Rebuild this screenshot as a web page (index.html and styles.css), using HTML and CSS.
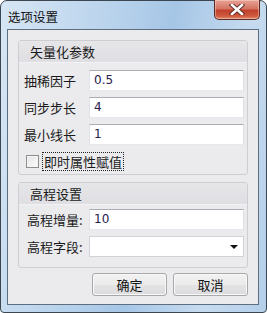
FILE: index.html
```html
<!DOCTYPE html>
<html lang="zh-CN">
<head>
    <meta charset="UTF-8">
    <title>选项设置</title>
    <link rel="stylesheet" href="styles.css">
</head>
<body>
    <div class="window">
        <div class="titlebar">
            <span class="title">选项设置</span>
            <div class="close-btn">
                <svg width="16" height="11" viewBox="0 0 16 11">
                    <path d="M3 1 L13 10 M13 1 L3 10" stroke="#5a2a22" stroke-width="4.4" fill="none" stroke-linecap="square"/>
                    <path d="M3 1 L13 10 M13 1 L3 10" stroke="#fff" stroke-width="2.6" fill="none" stroke-linecap="square"/>
                </svg>
            </div>
        </div>
        <div class="client">
            <div class="group group-vector">
                <div class="group-header">矢量化参数</div>
                <div class="group-body">
                    <div class="row">
                        <label class="lbl">抽稀因子</label>
                        <div class="field">0.5</div>
                    </div>
                    <div class="row">
                        <label class="lbl">同步步长</label>
                        <div class="field">4</div>
                    </div>
                    <div class="row">
                        <label class="lbl">最小线长</label>
                        <div class="field">1</div>
                    </div>
                    <div class="check-row">
                        <span class="checkbox"></span>
                        <span class="check-label">即时属性赋值</span>
                    </div>
                </div>
            </div>
            <div class="group group-height">
                <div class="group-header">高程设置</div>
                <div class="group-body">
                    <div class="row">
                        <label class="lbl">高程增量:</label>
                        <div class="field">10</div>
                    </div>
                    <div class="row">
                        <label class="lbl">高程字段:</label>
                        <div class="field combo"><span class="arrow"></span></div>
                    </div>
                </div>
            </div>
            <div class="buttons">
                <button class="btn">确定</button>
                <button class="btn">取消</button>
            </div>
        </div>
    </div>
</body>
</html>
```

FILE: styles.css
```css
* {
    box-sizing: border-box;
}
body {
    margin: 0;
    font-family: "Noto Sans CJK SC", "DejaVu Sans", sans-serif;
    font-size: 12px;
    color: #1a1a1a;
    background: #fff;
}
.window {
    width: 267px;
    height: 313px;
    border: 1px solid #3c4650;
    border-radius: 7px 7px 4px 4px;
    background: linear-gradient(100deg, #d7e6f4 0%, #b9d3ec 35%, #a6c6e6 55%, #c6dbef 80%, #b4cfea 100%);
    padding: 0 7px 7px 6px;
    display: flex;
    flex-direction: column;
}
.titlebar {
    height: 28px;
    display: flex;
    align-items: flex-start;
    position: relative;
}
.title {
    margin-top: 6px;
    margin-left: 1px;
    font-size: 12.5px;
    color: #111;
}
.close-btn {
    position: absolute;
    top: -1px;
    right: -1px;
    width: 46px;
    height: 20px;
    border: 1px solid #5c2a24;
    border-top: none;
    border-radius: 0 0 5px 5px;
    background: linear-gradient(#e9a597 0%, #d47464 45%, #c2402e 55%, #cf5a3e 85%, #e09070 100%);
    display: flex;
    align-items: center;
    justify-content: center;
    box-shadow: inset 0 0 0 1px rgba(255, 220, 210, 0.45);
}
.client {
    flex: 1;
    border: 1px solid #5d6e80;
    background: #ebebee;
    padding: 10px 10px 0 10px;
    display: flex;
    flex-direction: column;
}
.group {
    border: 1px solid #cdcdd2;
    border-radius: 3px;
    background: #ebebee;
}
.group-header {
    height: 22px;
    line-height: 21px;
    padding-left: 11px;
    background: linear-gradient(#e6e6e9, #dfdfe3);
    border-bottom: 1px solid #f2f2f4;
    font-size: 13px;
}
.group-body {
    padding: 7px 3px 3px 5px;
}
.group-vector .row {
    margin-bottom: 6px;
}
.group-height {
    margin-top: 7px;
}
.group-height .group-body {
    padding-top: 4px;
    padding-bottom: 10px;
}
.group-height .row + .row {
    margin-top: 6px;
}
.group-height .lbl {
    padding-left: 3px;
}
.row {
    display: flex;
    align-items: center;
    height: 21px;
}
.lbl {
    width: 65px;
    font-size: 13px;
}
.field {
    flex: 1;
    height: 21px;
    background: #fff;
    border: 1px solid;
    border-color: #abadb3 #dbdfe6 #e3e9ef #e2e3ea;
    padding-left: 4px;
    line-height: 18px;
    font-family: "DejaVu Sans", sans-serif;
    font-size: 12px;
    color: #24204a;
}
.combo {
    position: relative;
    border-color: #cfd2d8;
}
.arrow {
    position: absolute;
    right: 5px;
    top: 8px;
    border-left: 4px solid transparent;
    border-right: 4px solid transparent;
    border-top: 4px solid #111;
}
.check-row {
    display: flex;
    align-items: center;
    height: 20px;
    padding-left: 2px;
}
.checkbox {
    width: 13px;
    height: 13px;
    border: 1px solid #8f8f8f;
    background: linear-gradient(135deg, #e4e4e4, #fdfdfd);
    box-shadow: inset 0 0 0 1px #f4f4f4;
}
.check-label {
    margin-left: 3px;
    padding: 0 1px;
    height: 19px;
    line-height: 18px;
    border: 1px dotted #222;
    font-size: 13px;
}
.buttons {
    display: flex;
    justify-content: flex-end;
    gap: 6px;
    margin-top: 5px;
}
.btn {
    width: 75px;
    height: 23px;
    border: 1px solid #a8a8ab;
    border-radius: 3px;
    background: linear-gradient(#f2f2f3 0%, #ebebec 50%, #e3e3e5 51%, #dcdcde 100%);
    font-family: "Noto Sans CJK SC", sans-serif;
    font-size: 13px;
    color: #111;
    padding: 0;
    box-shadow: inset 0 0 0 1px #f8f8f8;
}
```
